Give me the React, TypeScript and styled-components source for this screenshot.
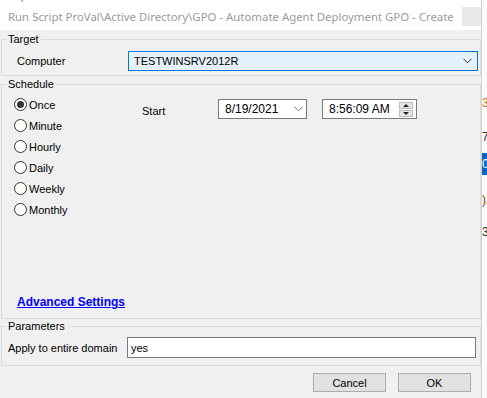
import React from "react";
import styled, { createGlobalStyle } from "styled-components";

const GlobalStyle = createGlobalStyle`
  html, body {
    margin: 0;
    padding: 0;
    background: #ffffff;
  }
  body {
    font-family: "Liberation Sans", Arial, sans-serif;
    font-size: 11px;
    color: #000000;
  }
`;

const Desktop = styled.div`
  display: flex;
  width: 487px;
  height: 398px;
  overflow: hidden;
`;

const Window = styled.div`
  width: 481px;
  flex-shrink: 0;
  border-right: 1px solid #d2d2d2;
  background: #f0f0f0;
  display: flex;
  flex-direction: column;
`;

const TitleBar = styled.div`
  height: 30px;
  background: #ffffff;
  display: flex;
  flex-direction: column;
`;

// bottoms of the letters of the window behind, cut by the screen edge
const Peek = styled.div`
  height: 2px;
  flex-shrink: 0;
  overflow: hidden;
  white-space: nowrap;
  color: #8a8a8a;
  font-size: 12px;
  line-height: 12px;
  display: flex;

  span {
    display: block;
    margin-top: -10px;
  }
`;

const PeekWord = styled.span<{ $gap: number }>`
  margin-left: ${(p) => p.$gap}px;
`;

const TitleRow = styled.div`
  flex: 1;
  display: flex;
  align-items: center;
  padding-left: 8px;
  padding-top: 1px;
`;

const TitleText = styled.div`
  color: #9b9b9b;
  font-family: "Noto Sans", "Open Sans", sans-serif;
  font-size: 11.4px;
  white-space: nowrap;
`;

const CloseBox = styled.div`
  margin-left: auto;
  width: 19px;
  height: 19px;
  background: #e9e9e9;
`;

const Group = styled.fieldset<{ $top: number }>`
  margin: ${(p) => p.$top}px 0 0 1px;
  width: 480px;
  box-sizing: border-box;
  border: 1px solid #dcdcdc;
  padding: 0;
  min-inline-size: 0;
`;

const Legend = styled.legend`
  margin-left: 4px;
  padding: 0 2px;
  font-size: 11px;
  line-height: 13px;
  height: 13px;
`;

const FieldRow = styled.div<{ $pad: string }>`
  display: flex;
  align-items: center;
  padding: ${(p) => p.$pad};
`;

const FieldLabel = styled.div<{ $width: number }>`
  width: ${(p) => p.$width}px;
  flex-shrink: 0;
`;

const Combo = styled.div`
  width: 350px;
  height: 20px;
  box-sizing: border-box;
  border: 1px solid #0078d7;
  background: #e5f1fb;
  display: flex;
  align-items: center;
  padding: 0 5px 0 5px;
`;

const ComboText = styled.span`
  flex: 1;
`;

const ScheduleBody = styled.div`
  height: 227px;
  box-sizing: border-box;
  padding: 7px 0 9px 12px;
  display: flex;
  flex-direction: column;
`;

const ScheduleTop = styled.div`
  display: flex;
  align-items: flex-start;
`;

const RadioList = styled.div`
  width: 128px;
  display: flex;
  flex-direction: column;
  gap: 8px;
`;

const RadioRow = styled.label`
  display: flex;
  align-items: center;
  height: 13px;
  gap: 2px;
`;

const RadioCircle = styled.span<{ $checked?: boolean }>`
  width: 13px;
  height: 13px;
  box-sizing: border-box;
  border-radius: 50%;
  border: 1px solid #333333;
  background: #ffffff;
  display: flex;
  align-items: center;
  justify-content: center;

  &::after {
    content: "";
    width: 7px;
    height: 7px;
    border-radius: 50%;
    background: ${(p) => (p.$checked ? "#333333" : "transparent")};
  }
`;

const StartRow = styled.div`
  display: flex;
  align-items: center;
  margin-top: 1px;
`;

const StartLabel = styled.div`
  width: 76px;
  padding-top: 3px;
`;

const Picker = styled.div<{ $width: number; $gap?: number }>`
  width: ${(p) => p.$width}px;
  margin-left: ${(p) => p.$gap || 0}px;
  height: 20px;
  box-sizing: border-box;
  border: 1px solid #7a7a7a;
  background: #ffffff;
  display: flex;
  align-items: center;
  padding: 0 3px 0 6px;
  font-size: 12px;
`;

const PickerText = styled.span`
  flex: 1;
`;

const Spinner = styled.div`
  width: 14px;
  height: 15px;
  display: flex;
  flex-direction: column;
  gap: 1px;
`;

const SpinHalf = styled.div<{ $up?: boolean }>`
  flex: 1;
  background: #e6e6e6;
  border: 1px solid #bcbcbc;
  display: flex;
  align-items: center;
  justify-content: center;

  &::after {
    content: "";
    border-left: 3px solid transparent;
    border-right: 3px solid transparent;
    ${(p) =>
      p.$up ? "border-bottom: 3px solid #202020;" : "border-top: 3px solid #202020;"}
  }
`;

const AdvancedLink = styled.a`
  margin-top: auto;
  margin-left: 3px;
  color: #0000ff;
  font-weight: bold;
  font-size: 12px;
  text-decoration: underline;
  cursor: pointer;
`;

const TextInput = styled.div`
  width: 349px;
  height: 21px;
  box-sizing: border-box;
  border: 1px solid #7a7a7a;
  background: #ffffff;
  display: flex;
  align-items: center;
  padding-left: 3px;
`;

const ButtonRow = styled.div`
  display: flex;
  justify-content: flex-end;
  gap: 12px;
  padding: 7px 10px 0 0;
`;

const DialogButton = styled.button`
  width: 73px;
  height: 19px;
  box-sizing: border-box;
  border: 1px solid #adadad;
  background: #e1e1e1;
  font-family: "Liberation Sans", Arial, sans-serif;
  font-size: 11px;
  color: #000000;
  padding: 0;
`;

const BackStrip = styled.div`
  flex: 1;
  background: #fbfbfb;
  display: flex;
  flex-direction: column;
  overflow: hidden;
  white-space: nowrap;
  font-size: 12px;
`;

const BackCell = styled.div<{ $height: number; $color?: string; $bg?: string }>`
  height: ${(p) => p.$height}px;
  line-height: ${(p) => p.$height}px;
  color: ${(p) => p.$color || "#333333"};
  background: ${(p) => p.$bg || "transparent"};
  flex-shrink: 0;
`;

const Chevron = ({ color }: { color: string }) => (
  <svg width="9" height="6" viewBox="0 0 9 6">
    <polyline points="0.5,0.8 4.5,4.8 8.5,0.8" fill="none" stroke={color} strokeWidth="1" />
  </svg>
);

const frequencies = ["Once", "Minute", "Hourly", "Daily", "Weekly", "Monthly"];

export default function App() {
  return (
    <>
      <GlobalStyle />
      <Desktop>
        <Window>
          <TitleBar>
            <Peek>
              <PeekWord $gap={0}>Script</PeekWord>
              <PeekWord $gap={32}>ProVal Active Direct</PeekWord>
              <PeekWord $gap={36}>GPO Automate</PeekWord>
            </Peek>
            <TitleRow>
              <TitleText>
                Run Script ProVal\Active Directory\GPO - Automate Agent Deployment GPO - Create
              </TitleText>
              <CloseBox />
            </TitleRow>
          </TitleBar>

          <Group $top={3}>
            <Legend>Target</Legend>
            <FieldRow $pad="5px 0 4px 15px">
              <FieldLabel $width={111}>Computer</FieldLabel>
              <Combo>
                <ComboText>TESTWINSRV2012R</ComboText>
                <Chevron color="#303030" />
              </Combo>
            </FieldRow>
          </Group>

          <Group $top={2}>
            <Legend>Schedule</Legend>
            <ScheduleBody>
              <ScheduleTop>
                <RadioList>
                  {frequencies.map((f, i) => (
                    <RadioRow key={f}>
                      <RadioCircle $checked={i === 0} />
                      {f}
                    </RadioRow>
                  ))}
                </RadioList>
                <StartRow>
                  <StartLabel>Start</StartLabel>
                  <Picker $width={89}>
                    <PickerText>8/19/2021</PickerText>
                    <Chevron color="#707070" />
                  </Picker>
                  <Picker $width={95} $gap={15}>
                    <PickerText>8:56:09 AM</PickerText>
                    <Spinner>
                      <SpinHalf $up />
                      <SpinHalf />
                    </Spinner>
                  </Picker>
                </StartRow>
              </ScheduleTop>
              <AdvancedLink>Advanced Settings</AdvancedLink>
            </ScheduleBody>
          </Group>

          <Group $top={1}>
            <Legend>Parameters</Legend>
            <FieldRow $pad="4px 0 7px 6px">
              <FieldLabel $width={119}>Apply to entire domain</FieldLabel>
              <TextInput>yes</TextInput>
            </FieldRow>
          </Group>

          <ButtonRow>
            <DialogButton>Cancel</DialogButton>
            <DialogButton>OK</DialogButton>
          </ButtonRow>
        </Window>

        <BackStrip>
          <BackCell $height={96} />
          <BackCell $height={14} $color="#c07a20">35</BackCell>
          <BackCell $height={20} />
          <BackCell $height={14}>7.</BackCell>
          <BackCell $height={9} />
          <BackCell $height={22} $bg="#0a64c8" $color="#ffffff">0</BackCell>
          <BackCell $height={18} />
          <BackCell $height={14} $color="#7a4a10">)2</BackCell>
          <BackCell $height={18} />
          <BackCell $height={14}>34</BackCell>
        </BackStrip>
      </Desktop>
    </>
  );
}
